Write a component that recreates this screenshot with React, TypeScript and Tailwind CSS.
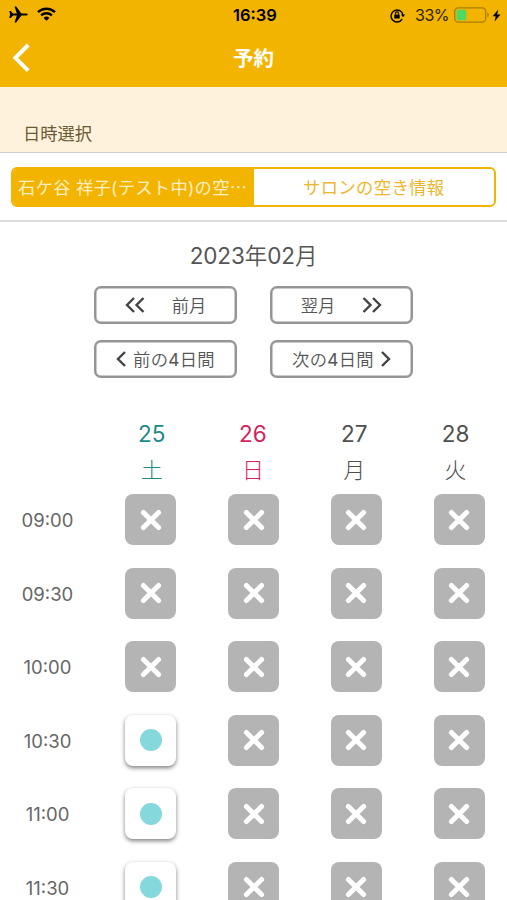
import { FC, memo } from "react";

interface SlotProps {
    open: boolean
}

const days = [
    { date: "25", name: "土", color: "text-[#1d8a87]" },
    { date: "26", name: "日", color: "text-[#d81e5b]" },
    { date: "27", name: "月", color: "text-[#4f4f4f]" },
    { date: "28", name: "火", color: "text-[#4f4f4f]" },
];

const rows = [
    { time: "09:00", slots: [false, false, false, false] },
    { time: "09:30", slots: [false, false, false, false] },
    { time: "10:00", slots: [false, false, false, false] },
    { time: "10:30", slots: [true, false, false, false] },
    { time: "11:00", slots: [true, false, false, false] },
    { time: "11:30", slots: [true, false, false, false] },
];

const StatusBar: FC = () => {
    return (
        <div className="h-[30px] grid grid-cols-[1fr_auto_1fr] items-center text-black">
            <div className="flex items-center gap-[9px] pl-[9px] pb-[2px]">
                <svg className="w-[19px] h-[17px]" viewBox="0 0 19 17" fill="currentColor">
                    <path d="M18.8 8.5c0-.7-.9-1.1-2.2-1.1h-4.2L7.2.6H5.6l2.2 6.8H3.9L1.9 4.9H.3l.8 3.6-.8 3.6h1.6l2-2.5h3.9l-2.2 6.8h1.6l5.2-6.8h4.2c1.3 0 2.2-.4 2.2-1.1z" />
                </svg>
                <svg className="w-[19px] h-[14px]" viewBox="0 0 19 14" fill="none" stroke="currentColor">
                    <path d="M1 5.2a12.2 12.2 0 0 1 17 0" strokeWidth="2.4" />
                    <path d="M4.1 8.4a7.8 7.8 0 0 1 10.8 0" strokeWidth="2.3" />
                    <path d="M9.5 13.8 6.6 10.9a4.1 4.1 0 0 1 5.8 0z" fill="currentColor" stroke="none" />
                </svg>
            </div>
            <p className="text-[16.5px] leading-none font-[600] pl-[3px]">16:39</p>
            <div className="flex items-center justify-end pr-[6px]">
                <svg className="w-[15px] h-[15px] mr-[10px]" viewBox="0 0 15 15" fill="none" stroke="currentColor">
                    <path d="M12.2 11.2A6 6 0 1 1 13 7" strokeWidth="1.4" />
                    <path d="M11 6.6h4l-2 2.7z" fill="currentColor" stroke="none" />
                    <rect x="4.3" y="6.5" width="5.4" height="4" rx=".6" fill="currentColor" stroke="none" />
                    <path d="M5.4 6.6V5.5a1.6 1.6 0 0 1 3.2 0v1.1" strokeWidth="1.1" />
                </svg>
                <p className="text-[16px] leading-none tracking-[-0.5px] mr-[5px] text-[#2b2200]">33%</p>
                <svg className="w-[36px] h-[16px] mr-[2px]" viewBox="0 0 36 16" fill="none">
                    <rect x=".7" y=".8" width="31" height="14.4" rx="3.6" stroke="#a67d0c" strokeWidth="1.3" />
                    <rect x="2.7" y="2.8" width="9.6" height="10.4" rx="1.6" fill="#4cd964" />
                    <path d="M33.4 5.6c1.8.5 1.8 4.3 0 4.8z" fill="#a67d0c" />
                </svg>
                <svg className="w-[9px] h-[13px]" viewBox="0 0 9 13" fill="currentColor">
                    <path d="M6.3.4.6 7.3h3.1L2.6 12.6l5.9-7.2H5.1z" />
                </svg>
            </div>
        </div>
    )
};

const Chevrons: FC<{ path: string, width: string }> = ({ path, width }) => {
    return (
        <svg className={width} viewBox={path.length > 20 ? "0 0 20 16" : "0 0 10 16"} fill="none"
            stroke="#444" strokeWidth="2.4">
            <path d={path} />
        </svg>
    )
};

const Slot: FC<SlotProps> = ({ open }) => {
    if (open) {
        return (
            <div className="size-[51px] rounded-[8px] bg-white flex items-center justify-center
                shadow-[0_2px_4px_rgba(0,0,0,0.5)]">
                <div className="size-[22px] rounded-full bg-[#85d8dc]" />
            </div>
        )
    }
    return (
        <div className="size-[51px] rounded-[8px] bg-[#b4b4b4] flex items-center justify-center">
            <svg className="size-[22px]" viewBox="0 0 22 22" stroke="white" strokeWidth="5" strokeLinecap="round">
                <path d="M3.4 3.4l15.2 15.2M18.6 3.4L3.4 18.6" />
            </svg>
        </div>
    )
};

const navButton = "h-[38px] rounded-[7px] border-2 border-[#959595] shadow-[inset_0_0_0_0.5px_#959595] flex items-center justify-center text-[17.3px] font-[350] text-[#555]";

const App: FC = () => {
    return (
        <div className="w-full h-[900px] overflow-hidden bg-white text-[#555] font-['Inter','Noto_Sans_CJK_JP',sans-serif]">
            <header className="h-[87px] bg-[#f3b400]">
                <StatusBar />
                <div className="h-[56px] grid grid-cols-[1fr_auto_1fr] items-center text-white">
                    <svg className="w-[18px] h-[30px] ml-[12px]" viewBox="0 0 18 30" fill="none" stroke="currentColor"
                        strokeWidth="4">
                        <path d="M16.2 2 3.4 14.8 16.2 27.6" />
                    </svg>
                    <h1 className="text-[20.5px] leading-none font-[600] pt-[2px]">予約</h1>
                </div>
            </header>

            <div className="h-[66px] bg-[#fff2dc] border-b-[1.5px] border-[#ccc] flex items-end pl-[23px] pb-[8px]">
                <h2 className="text-[17.3px] leading-[20px] text-[#6b5a33]">日時選択</h2>
            </div>

            <div className="h-[69px] border-b-2 border-[#ddd] px-[11px] pt-[14px]">
                <div className="h-[40px] grid grid-cols-2 rounded-[6px] border-2 border-[#f3b400] overflow-hidden
                    text-[17.3px] leading-[37px]">
                    <p className="bg-[#f3b400] text-[#ffefc6] pl-[5px] tracking-[0.3px] whitespace-nowrap">石ケ谷 祥子(テスト中)の空⋯</p>
                    <p className="text-[#eeb62c] text-center tracking-[0.4px]">サロンの空き情報</p>
                </div>
            </div>

            <p className="mt-[18px] text-center text-[22.5px] leading-[32px] tracking-[-0.1px]">
                2023<span className="font-[350]">年</span>02<span className="font-[350]">月</span>
            </p>

            <div className="mt-[14px] grid grid-cols-[143px_143px] gap-x-[33px] gap-y-[16px] justify-center">
                <div className={navButton}>
                    <Chevrons width="w-[20px] h-[16px] mr-[27px]" path="M9 1 2 8l7 7M18.5 1l-7 7 7 7" />
                    <span className="pt-px">前月</span>
                </div>
                <div className={navButton}>
                    <span className="pt-px">翌月</span>
                    <Chevrons width="w-[20px] h-[16px] ml-[27px]" path="M1.5 1l7 7-7 7M11 1l7 7-7 7" />
                </div>
                <div className={navButton}>
                    <Chevrons width="w-[10px] h-[16px] mr-[7px]" path="M9 1 2 8l7 7" />
                    <span className="pt-px tracking-[0.3px]">前の<span className="font-[400]">4</span>日間</span>
                </div>
                <div className={navButton}>
                    <span className="pt-px tracking-[0.3px]">次の<span className="font-[400]">4</span>日間</span>
                    <Chevrons width="w-[10px] h-[16px] ml-[7px]" path="M1 1l7 7-7 7" />
                </div>
            </div>

            <div className="mt-[38px] h-[78px] pl-[101px] grid grid-cols-[repeat(4,101.3px)] text-center">
                {
                    days.map((day) => (
                        <div key={day.date} className={day.color}>
                            <p className="text-[22.5px] leading-[36px]">{day.date}</p>
                            <p className="text-[22px] leading-[36px] font-[300]">{day.name}</p>
                        </div>
                    ))
                }
            </div>

            {
                rows.map((row) => (
                    <div key={row.time} className="h-[73.5px] grid grid-cols-[99.5px_repeat(4,102.8px)]
                        justify-items-center items-start">
                        <p className="text-[18.5px] leading-[52px] text-[#666] justify-self-start w-[95px] text-center">
                            {row.time}
                        </p>
                        {row.slots.map((open, i) => <Slot key={i} open={open} />)}
                    </div>
                ))
            }
        </div>
    )
}; export default memo(App);
